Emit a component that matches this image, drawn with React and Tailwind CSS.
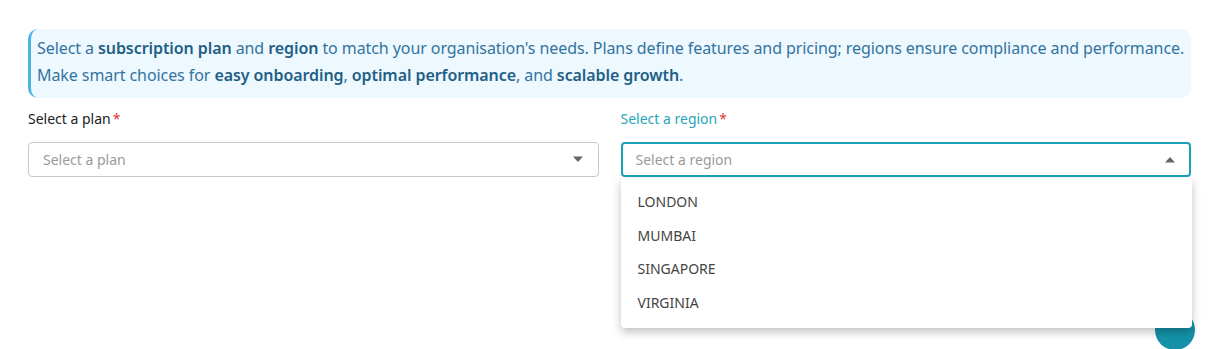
import React from "react";

const font = { fontFamily: '"Noto Sans", "Open Sans", sans-serif' };

function Caret({ up }) {
  return (
    <svg width="12" height="7" viewBox="0 0 12 7" className="shrink-0">
      {up ? (
        <path d="M1 6.5 L6 1 L11 6.5 Z" fill="#666" />
      ) : (
        <path d="M1 0.5 L6 6 L11 0.5 Z" fill="#666" />
      )}
    </svg>
  );
}

export default function App() {
  const regions = ["LONDON", "MUMBAI", "SINGAPORE", "VIRGINIA"];
  return (
    <div className="relative w-[1219px] h-[349px] overflow-hidden bg-white" style={font}>
      <div className="px-[28px] pt-[29px]">
        <div className="h-[69px] rounded-[10px] border-l-[3px] border-[#4bb4e6] bg-[#eef8ff] pt-[6px] pl-[6px] pr-2 text-[16px] leading-[27px] text-[#3274a0] tracking-[-0.08px] whitespace-nowrap">
          <div>
            Select a <b className="font-semibold text-[#1f5f86]">subscription plan</b> and{" "}
            <b className="font-semibold text-[#1f5f86]">region</b> to match your organisation's needs. Plans define features and pricing; regions ensure compliance and performance.
          </div>
          <div>
            Make smart choices for <b className="font-semibold text-[#1f5f86]">easy onboarding</b>,{" "}
            <b className="font-semibold text-[#1f5f86]">optimal performance</b>, and{" "}
            <b className="font-semibold text-[#1f5f86]">scalable growth</b>.
          </div>
        </div>

        <div className="mt-[10px] grid grid-cols-2 gap-[22px]">
          <div className="flex flex-col">
            <div className="h-[22px] text-[14px] leading-[22px] text-[#222]">
              Select a plan<span className="ml-[2px] text-[#e53935]">*</span>
            </div>
            <div className="mt-[12px] flex h-[35px] items-center justify-between rounded-[4px] border border-[#c8c8c8] pl-[14px] pr-[14px]">
              <span className="text-[14px] text-[#9a9a9a]">Select a plan</span>
              <Caret />
            </div>
          </div>
          <div className="relative flex flex-col">
            <div className="h-[22px] text-[14px] leading-[22px] text-[#27a6bb]">
              Select a region<span className="ml-[2px] text-[#e53935]">*</span>
            </div>
            <div className="mt-[12px] flex h-[35px] items-center justify-between rounded-[4px] border-2 border-[#1aa3b8] pl-[13px] pr-[13px]">
              <span className="text-[14px] text-[#9a9a9a]">Select a region</span>
              <Caret up />
            </div>
            <div className="absolute left-0 right-[-1px] top-[70px] z-20 rounded-[4px] bg-white pt-[7px] pb-[9px] shadow-[0_4px_10px_rgba(0,0,0,0.25)]">
              {regions.map((r) => (
                <div key={r} className="flex h-[33.5px] items-center pl-[17px] text-[14px] text-[#444]">
                  {r}
                </div>
              ))}
            </div>
          </div>
        </div>
      </div>
      <div className="absolute left-[1155px] top-[310px] z-10 h-[40px] w-[40px] rounded-full bg-[#1592a8]" />
    </div>
  );
}
